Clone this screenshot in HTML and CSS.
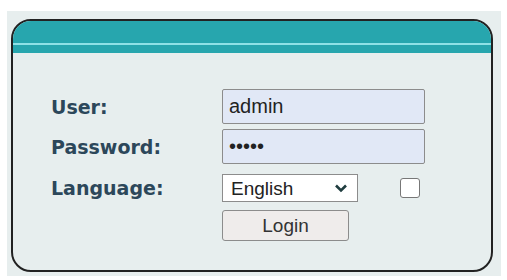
FILE: index.html
```html
<!DOCTYPE html>
<html lang="en">
<head>
    <meta charset="UTF-8">
    <meta name="viewport" content="width=device-width, initial-scale=1.0">
    <title>Login</title>
    <link rel="stylesheet" href="styles.css">
</head>
<body>
    <div class="frame">
        <div class="card">
            <div class="card-header"></div>
            <form class="card-body">
                <div class="row">
                    <label class="label" for="user">User:</label>
                    <input class="field" type="text" id="user" value="admin">
                </div>
                <div class="row">
                    <label class="label" for="pass">Password:</label>
                    <input class="field" type="password" id="pass" value="admin">
                </div>
                <div class="row row-lang">
                    <label class="label" for="lang">Language:</label>
                    <div class="select-wrap">
                        <select class="select" id="lang">
                            <option>English</option>
                        </select>
                        <svg class="chevron" width="14" height="10" viewBox="0 0 14 10">
                            <path d="M2 2.5 L7 7.5 L12 2.5" fill="none" stroke="#1f3d3f" stroke-width="2.6"/>
                        </svg>
                    </div>
                    <input class="check" type="checkbox">
                </div>
                <div class="row row-btn">
                    <span class="label"></span>
                    <button class="login" type="button">Login</button>
                </div>
            </form>
        </div>
    </div>
</body>
</html>
```

FILE: styles.css
```css
:root {
    --teal: #27a6ae;
    --teal-line: #8fe1e6;
    --panel: #e7eeee;
    --label: #2c475a;
}

body {
    margin: 0;
    background-color: #fff;
    font-family: 'Liberation Sans', Arial, sans-serif;
}

.frame {
    margin: 11px 6px 4px 7px;
    padding: 8px 8px 4px 4px;
    background-color: var(--panel);
    height: 253px;
}

.card {
    height: 249px;
    border: 2px solid #222;
    border-radius: 20px;
    overflow: hidden;
    background-color: var(--panel);
}

.card-header {
    height: 32px;
    background: linear-gradient(to bottom, var(--teal) 0 22px, var(--teal-line) 22px 24px, var(--teal) 24px);
}

.card-body {
    padding: 36px 0 0 38px;
    margin: 0;
}

.row {
    display: flex;
    align-items: center;
    margin-bottom: 5px;
}

.row-lang {
    margin-top: 10px;
    margin-bottom: 8px;
}

.label {
    width: 171px;
    flex-shrink: 0;
    font-family: 'DejaVu Sans', Verdana, sans-serif;
    font-weight: bold;
    font-size: 19px;
    color: var(--label);
}

.field {
    box-sizing: border-box;
    width: 203px;
    height: 35px;
    margin: 0;
    padding: 0 6px;
    border: 1px solid #8c8c8c;
    border-radius: 2px;
    background-color: #e1e8f6;
    font-family: 'Liberation Sans', Arial, sans-serif;
    font-size: 20px;
    color: #222;
}

.select-wrap {
    position: relative;
}

.select {
    appearance: none;
    box-sizing: border-box;
    width: 136px;
    height: 28px;
    margin: 0;
    padding: 0 0 0 8px;
    border: 1px solid #8c8c8c;
    border-radius: 0;
    background-color: #fff;
    font-family: 'Liberation Sans', Arial, sans-serif;
    font-size: 19px;
    color: #222;
}

.chevron {
    position: absolute;
    right: 10px;
    top: 9px;
    pointer-events: none;
}

.check {
    appearance: none;
    box-sizing: border-box;
    width: 20px;
    height: 20px;
    margin: 0 0 0 42px;
    border: 1px solid #777;
    border-radius: 3px;
    background-color: #fff;
}

.login {
    box-sizing: border-box;
    width: 127px;
    height: 31px;
    margin: 0;
    border: 1px solid #8c8c8c;
    border-radius: 3px;
    background-color: #efeceb;
    font-family: 'Liberation Sans', Arial, sans-serif;
    font-size: 19px;
    color: #333;
}
```
